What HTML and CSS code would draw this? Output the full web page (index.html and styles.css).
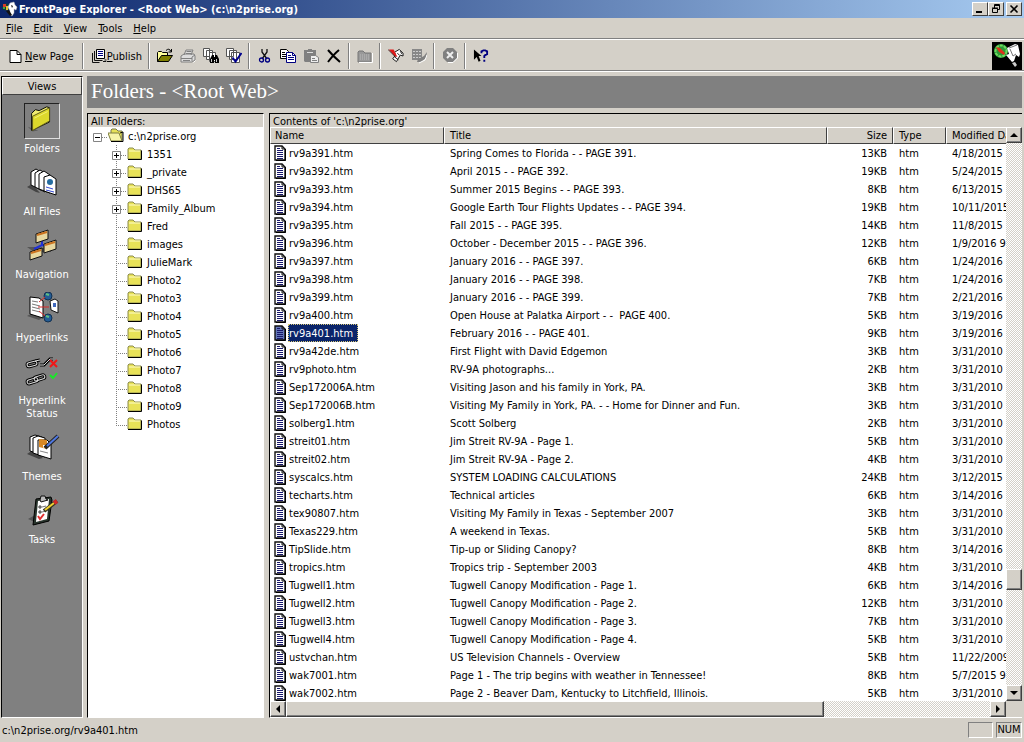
FILE: index.html
```
<!DOCTYPE html>
<html lang="en">
<head>
<meta charset="utf-8">
<title>FrontPage Explorer</title>
<link rel="stylesheet" href="styles.css">
</head>
<body>
<svg class="defs" aria-hidden="true">
  <symbol id="doc" viewBox="0 0 12 16"><path class="paper" d="M1 1h7l3 3v11H1z" stroke="#111" stroke-width="1.4"/><path d="M11.5 4v11.5H2" fill="none" stroke="#000"/><path d="M8 1v3h3" fill="none" stroke="#111"/><path d="M3 3.5h3M3 5.5h6M3 7.5h6M3 9.5h6M3 11.5h6M3 13.5h6" stroke="#18186c" fill="none"/></symbol>
  <symbol id="folder" viewBox="0 0 16 16"><path d="M1 13V3l1-1h4l2 2h6v9z" fill="#e8e258" stroke="#8c8c50"/><path d="M2 5h11" stroke="#fffcc8"/><path d="M1 13.5h13.5V4.500" fill="none" stroke="#000"/></symbol>
  <symbol id="folder-open" viewBox="0 0 16 16"><path d="M3 11V2l1-1h4l2 2h4v9z" fill="#e8e258" stroke="#777748"/><path d="M0 5h11l3 8H3z" fill="#f8f5a8" stroke="#7f7f40"/><path d="M3 13.500h12V4l-3 1" fill="none" stroke="#000"/></symbol>
  <symbol id="root" viewBox="0 0 18 18"><path d="M12 10.500h6" stroke="#808080" stroke-dasharray="1 1"/><path d="M3.500 6.500h8v8h-8z" fill="#fff" stroke="#848484"/><path d="M5 10.500h5" stroke="#000"/></symbol>
  <symbol id="plus" viewBox="0 0 19 18"><path d="M8.500 0v18M13 10.500h6" stroke="#808080" stroke-dasharray="1 1"/><path d="M4.500 6.500h8v8h-8z" fill="#fff" stroke="#848484"/><path d="M6 10.500h5M8.500 8v5" stroke="#000"/></symbol>
  <symbol id="tee" viewBox="0 0 19 18"><path d="M8.500 0v18M8 10.500h11" stroke="#808080" stroke-dasharray="1 1"/></symbol>
  <symbol id="ell" viewBox="0 0 19 18"><path d="M8.500 0v11M8 10.500h11" stroke="#808080" stroke-dasharray="1 1"/></symbol>
</svg>

<header class="titlebar">
  <svg class="app-icon" viewBox="0 0 16 16"><circle cx="4" cy="6" r="3.500" fill="#183c38"/><path d="M1 3h3v3H1z" fill="#d83c28"/><path d="M4 5h2v4H4z" fill="#e4c430"/><path d="M1 6h2v2H1z" fill="#40a840"/><path d="M8 2l4-1 1 3 2 2-1 3-2-1v4l-2 3-3-2 1-3-2-4z" fill="#fff" stroke="#bbb" stroke-width=".5"/><path d="M4 10l4 5 2-1-3-5zM9 4l2 1-1 2z" fill="#111"/></svg>
  <h1 class="title">FrontPage Explorer - &lt;Root Web&gt; (c:\n2prise.org)</h1>
  <div class="window-buttons">
    <button class="caption-button" aria-label="Minimize"><svg viewBox="0 0 12 10"><path d="M2 8h6" stroke="#000" stroke-width="2"/></svg></button>
    <button class="caption-button" aria-label="Restore"><svg viewBox="0 0 12 10"><path d="M4.500 4V.5h5v5H8M4 1.500h6M2.500 4.500h5v4h-5zM2 4h6" fill="none" stroke="#000"/></svg></button>
    <button class="caption-button close" aria-label="Close"><svg viewBox="0 0 12 10"><path d="M2.500 1.500l7 7m0-7l-7 7" stroke="#000" stroke-width="1.600"/></svg></button>
  </div>
</header>

<nav class="menubar">
  <button class="menu"><u>F</u>ile</button><button class="menu"><u>E</u>dit</button><button class="menu"><u>V</u>iew</button><button class="menu"><u>T</u>ools</button><button class="menu"><u>H</u>elp</button>
</nav>

<div class="toolbar">
  <button class="tool labelled new-page"><svg width="14" height="14" viewBox="0 0 14 14"><path d="M1.500 1.500h7l4 4v8h-11z" fill="#fff" stroke="#000"/><path d="M8.500 1.500v4h4" fill="none" stroke="#000"/></svg><span><u>N</u>ew Page</span></button>
  <span class="divider"></span>
  <button class="tool labelled publish"><svg width="15" height="14" viewBox="0 0 15 14"><path d="M4.500.5h8v9h-8z" fill="#fff" stroke="#000"/><path d="M6 2.500h5M6 4.500h5M6 6.500h5" stroke="#000080"/><path d="M2.500 2v9.500h8M.5 4v9.500h7M12.500 11h2M11 12.500h3" fill="none" stroke="#111"/></svg><span><u>P</u>ublish</span></button>
  <span class="divider"></span>
  <button class="tool" aria-label="Open"><svg viewBox="0 0 16 16"><path d="M.5 13.500V4.500l1-1h3l1 1h5v3" fill="#ffff99" stroke="#000"/><path d="M.5 13.500l4-6h11l-4 6z" fill="#808000" stroke="#000"/><path d="M9 2.500q3-3 5 1M14.500 1v3H11.500" fill="none" stroke="#000"/></svg></button>
  <button class="tool" aria-label="Print" disabled><svg viewBox="0 0 16 16"><path d="M4 7l2-5h7l-2 5M1 8l3-2h10l1 2v4l-3 2H1z" fill="#ddd" stroke="#808080"/><path d="M6.500 3.500h5M6 5.500h5M1 10.500h11M3 12.500h7M12 13V9l3-2" fill="none" stroke="#808080"/><path d="M13.500 14.500l2-2" stroke="#fff"/></svg></button>
  <button class="tool" aria-label="Find"><svg viewBox="0 0 16 16"><path d="M.5.5h6v8h-6zM3.500 2.500h6v9h-6zM6.500 4.500h6v9h-6z" fill="#fff" stroke="#555"/><path d="M7 15v-4l2-4h2v2h1V7h2l2 4v4h-4v-3h-1v3z" fill="#000"/><path d="M8.500 11v3M13.500 11v3" stroke="#ccc"/></svg></button>
  <button class="tool" aria-label="Spelling"><svg viewBox="0 0 16 16"><path d="M.5.5h7v8h-7zM3.500 2.500h7v9h-7zM5.500 4.500h8v10h-8z" fill="#fff" stroke="#555"/><path d="M6.500 9.500l3 4L15.500 5" fill="none" stroke="#00008c" stroke-width="2"/></svg></button>
  <span class="divider"></span>
  <button class="tool" aria-label="Cut"><svg viewBox="0 0 16 16"><path d="M5 1v3l5 7M10 1v3l-5 7" fill="none" stroke="#111" stroke-width="1.300"/><circle cx="4.500" cy="12" r="2" fill="none" stroke="#000080" stroke-width="1.300"/><circle cx="10.500" cy="12" r="2" fill="none" stroke="#000080" stroke-width="1.300"/></svg></button>
  <button class="tool" aria-label="Copy"><svg viewBox="0 0 16 16"><path d="M.5 1.500h6l2 2v7h-8z" fill="#fff" stroke="#000"/><path d="M2 4.500h3M2 6.500h5M2 8.500h5" stroke="#000"/><path d="M6.500 4.500h6l3 3v7h-9z" fill="#fff" stroke="#000080"/><path d="M12.500 4.500v3h3M8 7.500h3M8 9.500h6M8 11.500h6" fill="none" stroke="#000080"/></svg></button>
  <button class="tool" aria-label="Paste" disabled><svg viewBox="0 0 16 16"><path d="M1 2h4V1h4v1h4v12H2l-1-1z" fill="#808080"/><path d="M4 4.500h6" stroke="#ddd"/><path d="M7.500 7.500h5l3 2v5h-8z" fill="#eee" stroke="#808080"/><path d="M9 10.500h3M9 12.500h5" stroke="#808080"/></svg></button>
  <button class="tool" aria-label="Delete"><svg viewBox="0 0 16 16"><path d="M2 2q5 6 12 12M13 2Q8 6 2 14" fill="none" stroke="#000" stroke-width="2"/></svg></button>
  <span class="divider"></span>
  <button class="tool" aria-label="Up one level" disabled><svg viewBox="0 0 16 16"><path d="M1 14V4l1-1h4l2 2h6v9z" fill="#999" stroke="#777"/><path d="M3 7h9M3 9h9M3 11h9" stroke="#bbb" stroke-dasharray="1 1"/><path d="M2 14.500h13.500V5" fill="none" stroke="#fff"/></svg></button>
  <span class="divider"></span>
  <button class="tool" aria-label="FrontPage Editor"><svg viewBox="0 0 17 16"><path d="M7 4l5-3 4 4v3l-3-1-4 7-4-3 3-4z" fill="#fff" stroke="#111"/><path d="M10 5l2 2M7 9l4 3M13 3l2 3" stroke="#111"/><path d="M1 1h5l4 8-3-1z" fill="#e01818"/><path d="M0 1l8 8" stroke="#401010"/></svg></button>
  <button class="tool" aria-label="Image Composer" disabled><svg viewBox="0 0 16 16"><path d="M1 1h10v11H1z" fill="#888"/><path d="M2 3.500h8M2 6.500h8M2 9.500h8" stroke="#ccc" stroke-dasharray="2 1"/><path d="M6 14l1-3 6-3 3-4-1 6-5 4z" fill="#808080"/><path d="M8 15l6-3 2-5" fill="none" stroke="#fff"/></svg></button>
  <span class="divider"></span>
  <button class="tool" aria-label="Stop" disabled><svg viewBox="0 0 16 16"><path d="M5 0h6l4 4v6l-4 4H5l-4-4V4z" fill="#808080"/><path d="M6 14.500h5l4.500-4.500V5" fill="none" stroke="#fff"/><path d="M5 4l6 6m0-6l-6 6" stroke="#eee" stroke-width="2"/></svg></button>
  <span class="divider"></span>
  <button class="tool" aria-label="Help"><svg viewBox="0 0 17 16"><path d="M1 1v11l3-3 2 5 2-1-2-5h3z" fill="#000"/><path d="M9 5V3l2-1h2l2 1v3l-2 1-1 1v2M12 12v2" fill="none" stroke="#000080" stroke-width="2"/></svg></button>
  <svg class="brand" viewBox="0 0 30 28"><path d="M0 0h30v28H0z" fill="#000"/><circle cx="9" cy="9" r="7" fill="#2c9838"/><circle cx="9" cy="9" r="5.500" fill="none" stroke="#70dc60" stroke-width="2" stroke-dasharray="3 1"/><path d="M4 5l4 1 5 5-1 2-5-3z" fill="#e03018"/><path d="M15 6l8-4 3 1 2 9-1 3-3-2-2 6-2 1-6-7 3-1z" fill="#fff"/><path d="M17 6l8-3M18 7l3 7 3-2" fill="none" stroke="#777"/><path d="M20 21l3-1 2 3-2 2z" fill="#ccc"/></svg>
</div>

<main class="workspace">
  <aside class="views">
    <h2 class="views-title">Views</h2>
    <div class="views-list">
      <button class="view current"><svg viewBox="0 0 36 36"><path d="M3 24l5 5 6-1z" fill="#5c5c5c"/><path d="M7 10l4-4 4 1 8-4 3 1v15L7 28z" fill="#f0ec70" stroke="#000"/><path d="M8 13L26 4v14L8 28z" fill="#dcd82c" stroke="#55521c"/><path d="M10 15l14-7" stroke="#f4f078"/></svg><span>Folders</span></button>
      <button class="view"><svg viewBox="0 0 36 36"><path d="M3 21l5-3 8 9-4-1z" fill="#444"/><g fill="#fff" stroke="#000"><path d="M7 6l5-3 5 3v18L7 19z"/><path d="M11 7l5-3 5 3v19l-10-5z"/><path d="M15 8l5-3 6 4v18l-11-4z"/><path d="M20 11l6-2 6 4v16l-12-4z"/></g><circle cx="26" cy="16" r="3" fill="#246ca0"/><path d="M22 21l7 2M22 24l8 2" stroke="#3448d0"/></svg><span>All Files</span></button>
      <button class="view"><svg viewBox="0 0 36 36"><path d="M3 18h10l14 2v3H10z" fill="#555"/><path d="M10 20l8-4 8 1M18 10v6" fill="none" stroke="#2030d8" stroke-width="2"/><g fill="#e8d8a0" stroke="#111"><path d="M12 5l12-4v9l-12 4z"/><path d="M6 23l12-4v8L6 31z"/><path d="M20 15l12-4v9l-12 4z"/></g><path d="M13 6l10-3M7 24l10-3M21 16l10-3" stroke="#cc7420" stroke-width="2"/></svg><span>Navigation</span></button>
      <button class="view"><svg viewBox="0 0 36 36"><path d="M3 24l5-3 10 5-3 2z" fill="#555"/><path d="M6 5l9 1 4 3v17L6 22z" fill="#fff" stroke="#000"/><path d="M8 9l6 1M8 12l8 2M8 15l8 2M8 18l8 2" stroke="#777"/><path d="M26 9l5-2 3 2v12l-7-3z" fill="#fff" stroke="#111"/><circle cx="24" cy="4" r="4" fill="#245c94" stroke="#123050"/><circle cx="24" cy="26" r="4" fill="#245c94" stroke="#123050"/><path d="M22 2l3 1M22 24l3 1" stroke="#60c080" stroke-width="2"/><path d="M15 10l6-5M14 15h11M15 19l6 5" stroke="#d82828"/><path d="M29 11h3v4h-3z" fill="#4068bc"/></svg><span>Hyperlinks</span></button>
      <button class="view"><svg viewBox="0 0 36 36"><g fill="none" stroke="#000" stroke-width="3"><rect x="3" y="7" width="10" height="4" rx="2" transform="rotate(-15 8 9)"/><path d="M11 6l5-1M16 10h4l6-6h3"/><rect x="3" y="24" width="11" height="4" rx="2" transform="rotate(-18 8 26)"/><rect x="10" y="21" width="11" height="4" rx="2" transform="rotate(-18 15 23)"/></g><g fill="none" stroke="#ddd"><rect x="3" y="7" width="10" height="4" rx="2" transform="rotate(-15 8 9)"/><path d="M11 6l5-1M16 10h4l6-6h3"/><rect x="3" y="24" width="11" height="4" rx="2" transform="rotate(-18 8 26)"/><rect x="10" y="21" width="11" height="4" rx="2" transform="rotate(-18 15 23)"/></g><path d="M26 5l7 7m0-7l-7 7" stroke="#f01818" stroke-width="2"/><path d="M26 20l3 3 4-5" fill="none" stroke="#18e828" stroke-width="2"/></svg><span>Hyperlink<br>Status</span></button>
      <button class="view"><svg viewBox="0 0 36 36"><path d="M3 23l6-4 10 8-4 1z" fill="#444"/><g fill="#fff" stroke="#000"><path d="M6 6l5-2 7 2v18L6 20z"/><path d="M9 7l5-2 7 2v19l-12-4z"/><path d="M14 9h9l4 4v15l-13-4z"/></g><path d="M15 8l8 1v9l-8-2z" fill="#d88824"/><path d="M19 14h4l-4 3z" fill="#fff"/><path d="M16 20l8 2" stroke="#888"/><path d="M21 17L34 5" stroke="#222" stroke-width="4"/><path d="M23 15l11-10" stroke="#5078e0" stroke-width="2"/></svg><span>Themes</span></button>
      <button class="view"><svg viewBox="0 0 36 36"><path d="M4 25l7-4 6 8-2 1z" fill="#555"/><path d="M12 5l15-2 1 3-3 21-16 4z" fill="#28342c" stroke="#000"/><path d="M14 7l11-2-2 20-11 3z" fill="#fff"/><path d="M16 6l1-4h4l1 3 2 1-7 2z" fill="#bbb" stroke="#111"/><path d="M15 12h2v2h-2zM15 17h2v2h-2z" fill="#d8d8d8" stroke="#444"/><path d="M18 13l4-1M18 18l4-1" stroke="#777"/><path d="M14 22l2 3 4-5" stroke="#e03030" fill="none" stroke-width="2"/><path d="M20 17L33 7" stroke="#332" stroke-width="4"/><path d="M21 16l9-7" stroke="#f0d030" stroke-width="2"/><path d="M30 9l3-2" stroke="#d02828" stroke-width="4"/></svg><span>Tasks</span></button>
    </div>
  </aside>

  <section class="content">
    <h2 class="banner">Folders - &lt;Root Web&gt;</h2>
    <div class="panes">
      <section class="pane folders">
        <h3 class="pane-title">All Folders:</h3>
        <ul class="tree">
          <li><div class="node"><svg class="branch-root"><use href="#root"/></svg><svg class="icon"><use href="#folder-open"/></svg>c:\n2prise.org</div>
            <ul>
              <li class="node"><svg class="branch"><use href="#plus"/></svg><svg class="icon"><use href="#folder"/></svg>1351</li>
              <li class="node"><svg class="branch"><use href="#plus"/></svg><svg class="icon"><use href="#folder"/></svg>_private</li>
              <li class="node"><svg class="branch"><use href="#plus"/></svg><svg class="icon"><use href="#folder"/></svg>DHS65</li>
              <li class="node"><svg class="branch"><use href="#plus"/></svg><svg class="icon"><use href="#folder"/></svg>Family_Album</li>
              <li class="node"><svg class="branch"><use href="#tee"/></svg><svg class="icon"><use href="#folder"/></svg>Fred</li>
              <li class="node"><svg class="branch"><use href="#tee"/></svg><svg class="icon"><use href="#folder"/></svg>images</li>
              <li class="node"><svg class="branch"><use href="#tee"/></svg><svg class="icon"><use href="#folder"/></svg>JulieMark</li>
              <li class="node"><svg class="branch"><use href="#tee"/></svg><svg class="icon"><use href="#folder"/></svg>Photo2</li>
              <li class="node"><svg class="branch"><use href="#tee"/></svg><svg class="icon"><use href="#folder"/></svg>Photo3</li>
              <li class="node"><svg class="branch"><use href="#tee"/></svg><svg class="icon"><use href="#folder"/></svg>Photo4</li>
              <li class="node"><svg class="branch"><use href="#tee"/></svg><svg class="icon"><use href="#folder"/></svg>Photo5</li>
              <li class="node"><svg class="branch"><use href="#tee"/></svg><svg class="icon"><use href="#folder"/></svg>Photo6</li>
              <li class="node"><svg class="branch"><use href="#tee"/></svg><svg class="icon"><use href="#folder"/></svg>Photo7</li>
              <li class="node"><svg class="branch"><use href="#tee"/></svg><svg class="icon"><use href="#folder"/></svg>Photo8</li>
              <li class="node"><svg class="branch"><use href="#tee"/></svg><svg class="icon"><use href="#folder"/></svg>Photo9</li>
              <li class="node"><svg class="branch"><use href="#ell"/></svg><svg class="icon"><use href="#folder"/></svg>Photos</li>
            </ul>
          </li>
        </ul>
      </section>

      <section class="pane files">
        <h3 class="pane-title">Contents of 'c:\n2prise.org'</h3>
        <div class="list-area">
          <div class="list">
            <table>
              <colgroup><col class="col-name"><col class="col-title"><col class="col-size"><col class="col-type"><col class="col-date"></colgroup>
              <thead><tr><th>Name</th><th>Title</th><th class="size">Size</th><th>Type</th><th>Modified Da</th></tr></thead>
              <tbody>
                <tr><td><svg class="doc"><use href="#doc"/></svg><span>rv9a391.htm</span></td><td>Spring Comes to Florida - - PAGE 391.</td><td>13KB</td><td>htm</td><td>4/18/2015</td></tr>
                <tr><td><svg class="doc"><use href="#doc"/></svg><span>rv9a392.htm</span></td><td>April 2015 - - PAGE 392.</td><td>19KB</td><td>htm</td><td>5/24/2015</td></tr>
                <tr><td><svg class="doc"><use href="#doc"/></svg><span>rv9a393.htm</span></td><td>Summer 2015 Begins - - PAGE 393.</td><td>8KB</td><td>htm</td><td>6/13/2015</td></tr>
                <tr><td><svg class="doc"><use href="#doc"/></svg><span>rv9a394.htm</span></td><td>Google Earth Tour Flights Updates - - PAGE 394.</td><td>19KB</td><td>htm</td><td>10/11/2015</td></tr>
                <tr><td><svg class="doc"><use href="#doc"/></svg><span>rv9a395.htm</span></td><td>Fall 2015 - - PAGE 395.</td><td>14KB</td><td>htm</td><td>11/8/2015</td></tr>
                <tr><td><svg class="doc"><use href="#doc"/></svg><span>rv9a396.htm</span></td><td>October - December 2015 - - PAGE 396.</td><td>12KB</td><td>htm</td><td>1/9/2016 9</td></tr>
                <tr><td><svg class="doc"><use href="#doc"/></svg><span>rv9a397.htm</span></td><td>January 2016 - - PAGE 397.</td><td>6KB</td><td>htm</td><td>1/24/2016</td></tr>
                <tr><td><svg class="doc"><use href="#doc"/></svg><span>rv9a398.htm</span></td><td>January 2016 - - PAGE 398.</td><td>7KB</td><td>htm</td><td>1/24/2016</td></tr>
                <tr><td><svg class="doc"><use href="#doc"/></svg><span>rv9a399.htm</span></td><td>January 2016 - - PAGE 399.</td><td>7KB</td><td>htm</td><td>2/21/2016</td></tr>
                <tr><td><svg class="doc"><use href="#doc"/></svg><span>rv9a400.htm</span></td><td>Open House at Palatka Airport - -&nbsp; PAGE 400.</td><td>5KB</td><td>htm</td><td>3/19/2016</td></tr>
                <tr class="selected"><td><svg class="doc"><use href="#doc"/></svg><span>rv9a401.htm</span></td><td>February 2016 - - PAGE 401.</td><td>9KB</td><td>htm</td><td>3/19/2016</td></tr>
                <tr><td><svg class="doc"><use href="#doc"/></svg><span>rv9a42de.htm</span></td><td>First Flight with David Edgemon</td><td>3KB</td><td>htm</td><td>3/31/2010</td></tr>
                <tr><td><svg class="doc"><use href="#doc"/></svg><span>rv9photo.htm</span></td><td>RV-9A photographs...</td><td>2KB</td><td>htm</td><td>3/31/2010</td></tr>
                <tr><td><svg class="doc"><use href="#doc"/></svg><span>Sep172006A.htm</span></td><td>Visiting Jason and his family in York, PA.</td><td>3KB</td><td>htm</td><td>3/31/2010</td></tr>
                <tr><td><svg class="doc"><use href="#doc"/></svg><span>Sep172006B.htm</span></td><td>Visiting My Family in York, PA. - - Home for Dinner and Fun.</td><td>3KB</td><td>htm</td><td>3/31/2010</td></tr>
                <tr><td><svg class="doc"><use href="#doc"/></svg><span>solberg1.htm</span></td><td>Scott Solberg</td><td>2KB</td><td>htm</td><td>3/31/2010</td></tr>
                <tr><td><svg class="doc"><use href="#doc"/></svg><span>streit01.htm</span></td><td>Jim Streit RV-9A - Page 1.</td><td>5KB</td><td>htm</td><td>3/31/2010</td></tr>
                <tr><td><svg class="doc"><use href="#doc"/></svg><span>streit02.htm</span></td><td>Jim Streit RV-9A - Page 2.</td><td>4KB</td><td>htm</td><td>3/31/2010</td></tr>
                <tr><td><svg class="doc"><use href="#doc"/></svg><span>syscalcs.htm</span></td><td>SYSTEM LOADING CALCULATIONS</td><td>24KB</td><td>htm</td><td>3/12/2015</td></tr>
                <tr><td><svg class="doc"><use href="#doc"/></svg><span>techarts.htm</span></td><td>Technical articles</td><td>6KB</td><td>htm</td><td>3/14/2016</td></tr>
                <tr><td><svg class="doc"><use href="#doc"/></svg><span>tex90807.htm</span></td><td>Visiting My Family in Texas - September 2007</td><td>3KB</td><td>htm</td><td>3/31/2010</td></tr>
                <tr><td><svg class="doc"><use href="#doc"/></svg><span>Texas229.htm</span></td><td>A weekend in Texas.</td><td>5KB</td><td>htm</td><td>3/31/2010</td></tr>
                <tr><td><svg class="doc"><use href="#doc"/></svg><span>TipSlide.htm</span></td><td>Tip-up or Sliding Canopy?</td><td>8KB</td><td>htm</td><td>3/14/2016</td></tr>
                <tr><td><svg class="doc"><use href="#doc"/></svg><span>tropics.htm</span></td><td>Tropics trip - September 2003</td><td>4KB</td><td>htm</td><td>3/31/2010</td></tr>
                <tr><td><svg class="doc"><use href="#doc"/></svg><span>Tugwell1.htm</span></td><td>Tugwell Canopy Modification - Page 1.</td><td>6KB</td><td>htm</td><td>3/14/2016</td></tr>
                <tr><td><svg class="doc"><use href="#doc"/></svg><span>Tugwell2.htm</span></td><td>Tugwell Canopy Modification - Page 2.</td><td>12KB</td><td>htm</td><td>3/31/2010</td></tr>
                <tr><td><svg class="doc"><use href="#doc"/></svg><span>Tugwell3.htm</span></td><td>Tugwell Canopy Modification - Page 3.</td><td>7KB</td><td>htm</td><td>3/31/2010</td></tr>
                <tr><td><svg class="doc"><use href="#doc"/></svg><span>Tugwell4.htm</span></td><td>Tugwell Canopy Modification - Page 4.</td><td>5KB</td><td>htm</td><td>3/31/2010</td></tr>
                <tr><td><svg class="doc"><use href="#doc"/></svg><span>ustvchan.htm</span></td><td>US Television Channels - Overview</td><td>5KB</td><td>htm</td><td>11/22/2009</td></tr>
                <tr><td><svg class="doc"><use href="#doc"/></svg><span>wak7001.htm</span></td><td>Page 1 - The trip begins with weather in Tennessee!</td><td>8KB</td><td>htm</td><td>5/7/2015 9</td></tr>
                <tr><td><svg class="doc"><use href="#doc"/></svg><span>wak7002.htm</span></td><td>Page 2 - Beaver Dam, Kentucky to Litchfield, Illinois.</td><td>5KB</td><td>htm</td><td>3/31/2010</td></tr>
              </tbody>
            </table>
          </div>
          <div class="scroll vertical">
            <button class="scroll-button" aria-label="Scroll up"><svg viewBox="0 0 8 8"><path d="M0 6l4-4 4 4z"/></svg></button>
            <span class="track-before"></span><span class="thumb"></span><span class="track-after"></span>
            <button class="scroll-button" aria-label="Scroll down"><svg viewBox="0 0 8 8"><path d="M0 2l4 4 4-4z"/></svg></button>
          </div>
          <div class="scroll horizontal">
            <button class="scroll-button" aria-label="Scroll left"><svg viewBox="0 0 8 8"><path d="M6 0L2 4l4 4z"/></svg></button>
            <span class="thumb"></span><span class="track-after"></span>
            <button class="scroll-button" aria-label="Scroll right"><svg viewBox="0 0 8 8"><path d="M2 0l4 4-4 4z"/></svg></button>
          </div>
        </div>
      </section>
    </div>
  </section>
</main>

<footer class="statusbar">
  <span class="status-text">c:\n2prise.org/rv9a401.htm</span>
  <span class="status-cell"></span>
  <span class="status-cell">NUM</span>
</footer>
</body>
</html>
```
FILE: styles.css
```
* { box-sizing: border-box; }

body {
  --face: #d4d0c8;
  --shade: #808080;
  --dark: #404040;
  margin: 0;
  height: 100vh;
  display: flex;
  flex-direction: column;
  overflow: hidden;
  background: var(--face);
  color: #000;
  font: 11px/13px Tahoma, "DejaVu Sans Condensed", "Noto Sans", sans-serif;
}

h1, h2, h3, ul { margin: 0; padding: 0; font: inherit; list-style: none; }
button { margin: 0; padding: 0; border: 0; background: none; color: inherit; font: inherit; }
svg { display: block; flex: none; }
.defs { position: absolute; width: 0; height: 0; }

.titlebar {
  flex: none;
  display: flex;
  align-items: center;
  height: 18px;
  padding: 0 2px;
  background: linear-gradient(90deg, #0a246a, #a6caf0);
}
.app-icon { width: 16px; height: 16px; }
.title { flex: 1; padding-left: 1px; color: #fff; font-weight: bold; }
.window-buttons { display: flex; }
.caption-button {
  width: 16px;
  height: 14px;
  padding: 1px;
  background: var(--face);
  border: 1px solid;
  border-color: #fff var(--dark) var(--dark) #fff;
}
.caption-button svg { width: 12px; height: 10px; }
.caption-button.close { margin-left: 2px; }

.menubar {
  flex: none;
  display: flex;
  gap: 11px;
  height: 21px;
  padding: 0 6px;
  border-bottom: 1px solid var(--shade);
}
.toolbar {
  flex: none;
  display: flex;
  align-items: center;
  height: 32px;
  padding: 2px 2px 0 8px;
  border-top: 1px solid #fff;
  border-bottom: 1px solid var(--shade);
}
.tool { display: flex; align-items: center; justify-content: center; width: 23px; height: 22px; }
.tool svg { width: 16px; height: 16px; }
.labelled { width: auto; gap: 2px; }
.labelled svg { width: 15px; height: 14px; }
.new-page { width: 71px; justify-content: flex-start; }
.publish { width: 58px; justify-content: flex-end; padding-right: 3px; gap: 0; }
.divider {
  width: 2px;
  height: 26px;
  margin: 0 3px;
  border-left: 1px solid var(--shade);
  border-right: 1px solid #fff;
}
.toolbar .brand { width: 30px; height: 28px; margin-left: auto; }

.workspace {
  flex: 1;
  min-height: 0;
  display: flex;
  gap: 4px;
  padding: 4px 2px 0 1px;
  border-top: 1px solid #fff;
}
.views {
  flex: none;
  width: 82px;
  background: var(--shade);
  border: 1px solid;
  border-color: #000 #fff #fff #000;
}
.views-title {
  height: 18px;
  text-align: center;
  line-height: 17px;
  background: var(--face);
  border: 1px solid;
  border-color: #fff var(--dark) var(--dark) #fff;
}
.views-list { display: flex; flex-direction: column; align-items: center; gap: 11px; padding-top: 8px; }
.view { display: flex; flex-direction: column; align-items: center; gap: 3px; color: #fff; text-align: center; }
.view svg { width: 36px; height: 36px; }
.current svg { border: 1px solid; border-color: #222 #ddd #ddd #222; }

.content { flex: 1; min-width: 0; display: flex; flex-direction: column; gap: 5px; }
.banner {
  flex: none;
  height: 32px;
  padding-left: 4px;
  background: var(--shade);
  color: #fff;
  font: 21px/30px "Times New Roman", "Liberation Serif", serif;
}
.panes { flex: 1; min-height: 0; display: flex; gap: 5px; }
.pane {
  display: flex;
  flex-direction: column;
  border: 1px solid;
  border-color: #000 #fff #fff #000;
  background: #fff;
}
.pane-title { flex: none; height: 13px; padding-left: 3px; background: var(--face); line-height: 15px; }
.folders { flex: none; width: 177px; }
.files { flex: 1; min-width: 0; border-right: 0; }

.tree { padding-left: 2px; }
.tree ul { padding-left: 18px; }
.node { display: flex; align-items: center; height: 18px; }
.branch-root { width: 18px; height: 18px; }
.branch { width: 19px; height: 18px; }
.icon { width: 16px; height: 16px; margin-right: 4px; }

.list-area {
  flex: 1;
  min-height: 0;
  display: grid;
  grid-template-columns: minmax(0, 1fr) 16px;
  grid-template-rows: minmax(0, 1fr) 16px;
  background: var(--face);
}
.list { overflow: hidden; background: #fff; }
table { width: 790px; table-layout: fixed; border-collapse: separate; border-spacing: 0; }
.col-name { width: 174px; }
.col-title { width: 383px; }
.col-size { width: 66px; }
.col-type { width: 53px; }
th {
  height: 17px;
  padding: 0 5px;
  text-align: left;
  font-weight: normal;
  white-space: nowrap;
  background: var(--face);
  border: 1px solid;
  border-color: #fff var(--dark) var(--dark) #fff;
}
th:first-child { padding-left: 4px; }
td { height: 18px; padding: 0 6px; white-space: nowrap; }
th.size, td:nth-child(3) { text-align: right; }
td:first-child { display: flex; align-items: center; padding: 0 4px; }
.doc { width: 12px; height: 16px; margin-right: 2px; }
.paper { fill: var(--paper, #fff); }
td span { padding: 3px 5px 2px 1px; }
.selected span { background: #0a246a; color: #fff; outline: 1px dotted #d8c878; outline-offset: -1px; }
.selected { --paper: #6478b8; }

.scroll {
  display: flex;
  background: repeating-conic-gradient(#fff 0 25%, var(--face) 0 50%) 0 0 / 2px 2px;
}
.vertical { flex-direction: column; }
.scroll-button, .thumb {
  background: var(--face);
  border: 1px solid;
  border-color: #fff var(--dark) var(--dark) #fff;
  box-shadow: inset -1px -1px var(--shade);
}
.scroll-button { flex: none; display: grid; place-items: center; width: 16px; height: 16px; }
.scroll-button svg { width: 8px; height: 8px; }
.vertical .track-before { flex: 427; }
.vertical .thumb { flex: none; height: 21px; }
.vertical .track-after { flex: 95; }
.horizontal .thumb { flex: 538; }
.horizontal .track-after { flex: 166; }

.statusbar {
  flex: none;
  display: flex;
  gap: 3px;
  height: 24px;
  padding: 3px 2px;
  border-top: 1px solid var(--face);
}
.status-text { flex: 1; line-height: 17px; }
.status-cell {
  width: 25px;
  height: 16px;
  text-align: center;
  border: 1px solid;
  border-color: var(--shade) #fff #fff var(--shade);
}
.status-cell:last-child { width: 26px; }
```
